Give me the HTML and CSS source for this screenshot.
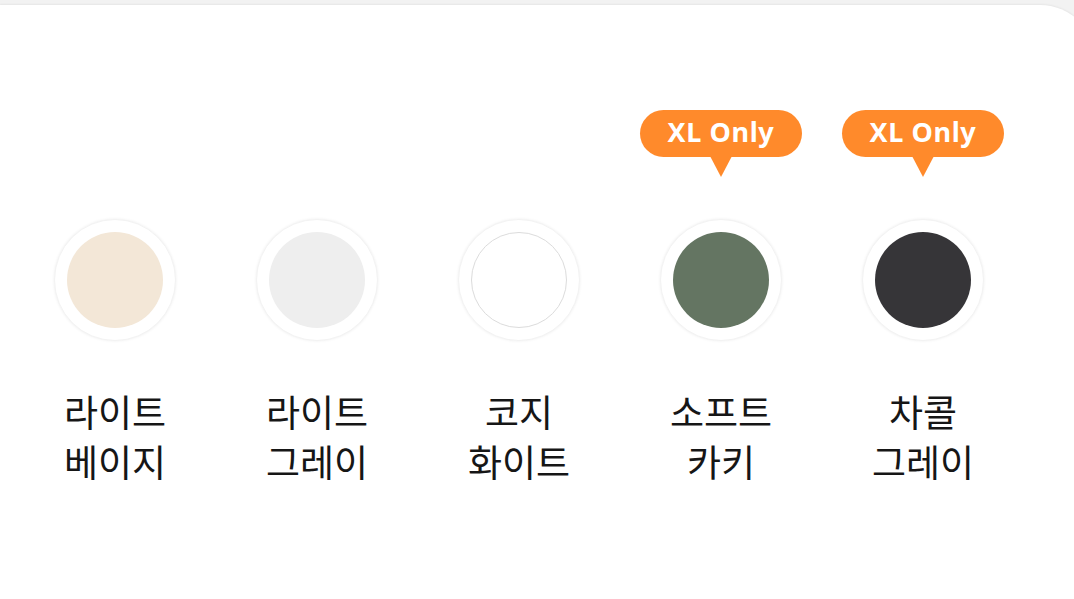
FILE: index.html
```html
<!DOCTYPE html>
<html lang="ko">
<head>
<meta charset="utf-8">
<link rel="stylesheet" href="styles.css">
</head>
<body>
<div class="card">
  <div class="colors">
    <div class="item">
      <div class="badge-slot"></div>
      <div class="swatch"><span class="dot beige"></span></div>
      <div class="label">라이트<br>베이지</div>
    </div>
    <div class="item">
      <div class="badge-slot"></div>
      <div class="swatch"><span class="dot lightgray"></span></div>
      <div class="label">라이트<br>그레이</div>
    </div>
    <div class="item">
      <div class="badge-slot"></div>
      <div class="swatch"><span class="dot white"></span></div>
      <div class="label">코지<br>화이트</div>
    </div>
    <div class="item">
      <div class="badge-slot"><span class="badge">XL Only</span></div>
      <div class="swatch"><span class="dot khaki"></span></div>
      <div class="label">소프트<br>카키</div>
    </div>
    <div class="item">
      <div class="badge-slot"><span class="badge">XL Only</span></div>
      <div class="swatch"><span class="dot charcoal"></span></div>
      <div class="label">차콜<br>그레이</div>
    </div>
  </div>
</div>
</body>
</html>
```
FILE: styles.css
```css
html, body {
  margin: 0;
  padding: 0;
  height: 100%;
  background: #f2f2f2;
  overflow: hidden;
}
body {
  padding-top: 5px;
  box-sizing: border-box;
  font-family: "Noto Sans CJK KR", "Noto Sans", sans-serif;
}
.card {
  background: #fff;
  height: 100%;
  width: calc(100% + 22px);
  border-top-right-radius: 56px;
  box-shadow: 0 -1px 2px rgba(0,0,0,0.05);
  padding: 105px 0 0 14px;
  box-sizing: border-box;
}
.colors {
  display: flex;
}
.item {
  width: 202px;
  display: flex;
  flex-direction: column;
  align-items: center;
}
.badge-slot {
  height: 109px;
  display: flex;
  justify-content: center;
  align-items: flex-start;
}
.badge {
  position: relative;
  display: flex;
  align-items: center;
  justify-content: center;
  width: 162px;
  height: 47px;
  padding-bottom: 4px;
  box-sizing: border-box;
  border-radius: 24px;
  background: #ff8a2b;
  color: #fff;
  font-family: "Noto Sans", sans-serif;
  font-weight: 700;
  font-size: 27px;
  letter-spacing: 0.6px;
}
.badge::after {
  content: "";
  position: absolute;
  left: 50%;
  top: 46px;
  transform: translateX(-50%);
  border-left: 11px solid transparent;
  border-right: 11px solid transparent;
  border-top: 21px solid #ff8a2b;
}
.swatch {
  width: 122px;
  height: 122px;
  border-radius: 50%;
  background: #fff;
  box-shadow: 0 0 3px rgba(0,0,0,0.07);
  border: 1px solid #f3f3f3;
  box-sizing: border-box;
  display: flex;
  align-items: center;
  justify-content: center;
}
.dot {
  width: 96px;
  height: 96px;
  border-radius: 50%;
  box-sizing: border-box;
}
.beige { background: #f3e7d7; }
.lightgray { background: #eeeeee; }
.white { background: #fff; border: 1px solid #dcdcdc; }
.khaki { background: #647562; }
.charcoal { background: #363538; }
.label {
  margin-top: 45px;
  font-size: 37px;
  line-height: 50px;
  color: #161616;
  text-align: center;
  letter-spacing: 0;
}
```
